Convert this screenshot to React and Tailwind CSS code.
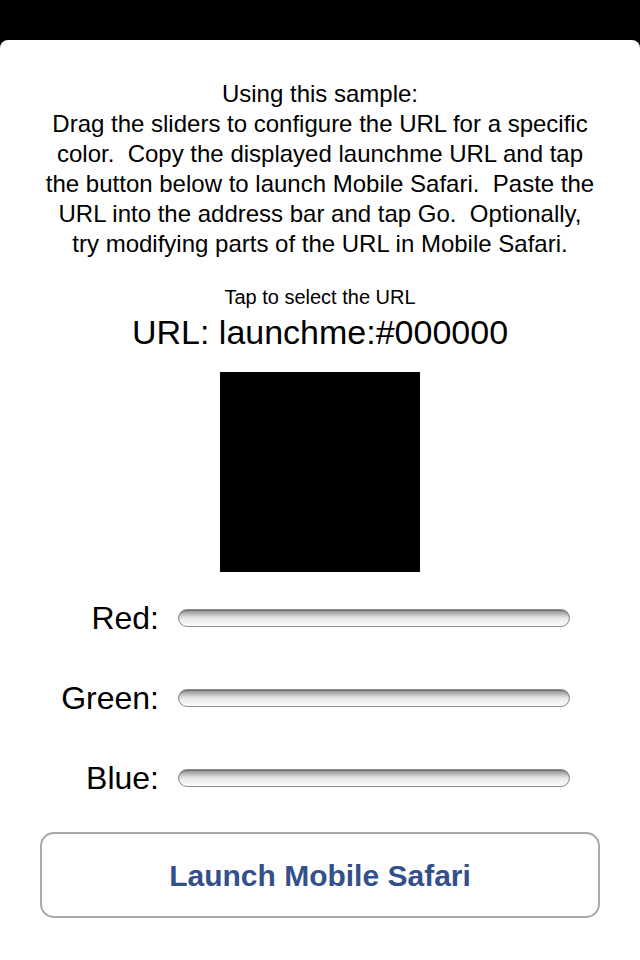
import React from 'react';

const Slider = ({ label }) => (
  <div className="flex items-center h-[80px]">
    <div className="w-[161px] pr-[2px] text-right text-[32px] text-black leading-none">{label}</div>
    <div className="ml-[17px] w-[392px] h-[18px] rounded-full border border-[#8e8e8e] bg-gradient-to-b from-[#8f8f8f] via-[#e6e6e6] to-[#fdfdfd] shadow-[inset_0_1px_1px_rgba(0,0,0,0.25)]" />
  </div>
);

export default function App() {
  return (
    <div className="w-[640px] h-[960px] bg-black flex flex-col" style={{ fontFamily: '"Liberation Sans", Arial, sans-serif' }}>
      <div className="h-[40px] shrink-0" />
      {/* Sheet */}
      <div className="flex-1 bg-white rounded-t-[8px] flex flex-col items-center">
        <div className="pt-[39px] text-center text-[24px] leading-[30px] text-black whitespace-nowrap">
          Using this sample:
          <br />
          Drag the sliders to configure the URL for a specific
          <br />
          color.&nbsp; Copy the displayed launchme URL and tap
          <br />
          the button below to launch Mobile Safari.&nbsp; Paste the
          <br />
          URL into the address bar and tap Go.&nbsp; Optionally,
          <br />
          try modifying parts of the URL in Mobile Safari.
        </div>

        <div className="mt-[26px] text-[20px] leading-[24px] text-black">Tap to select the URL</div>
        <div className="mt-[3px] text-[34px] leading-[40px] text-black">URL: launchme:#000000</div>

        <div className="mt-[20px] w-[200px] h-[200px] bg-black" />

        <div className="mt-[6px] w-full flex flex-col">
          <Slider label="Red:" />
          <Slider label="Green:" />
          <Slider label="Blue:" />
        </div>

        <button className="mt-[14px] w-[560px] h-[86px] rounded-[14px] border-2 border-[#a9a9a9] bg-white text-[#34508a] font-bold text-[30px]">
          Launch Mobile Safari
        </button>
      </div>
    </div>
  );
}
